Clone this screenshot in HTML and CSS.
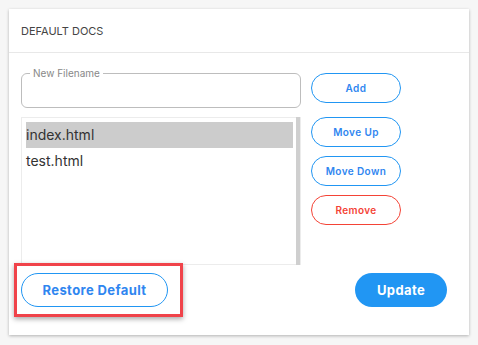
FILE: index.html
```html
<!DOCTYPE html>
<html>
<head>
<meta charset="utf-8">
<link rel="stylesheet" href="styles.css">
</head>
<body>
<div class="card">
  <div class="card-header">Default Docs</div>
  <div class="card-body">
    <div class="editor">
      <fieldset class="field">
        <legend class="field-label">New Filename</legend>
        <input class="field-input" type="text">
      </fieldset>
      <button class="btn btn-outline btn-small btn-add">Add</button>
      <div class="list">
        <div class="list-items">
          <div class="list-item selected">index.html</div>
          <div class="list-item">test.html</div>
        </div>
        <div class="list-scroll"></div>
      </div>
      <div class="actions">
        <button class="btn btn-outline btn-small">Move Up</button>
        <button class="btn btn-outline btn-small">Move Down</button>
        <button class="btn btn-danger btn-small">Remove</button>
      </div>
    </div>
  </div>
  <div class="card-footer">
    <div class="highlight-wrap">
      <button class="btn btn-outline btn-large btn-restore">Restore Default</button>
      <div class="highlight"></div>
    </div>
    <button class="btn btn-primary btn-large btn-update">Update</button>
  </div>
</div>
</body>
</html>
```

FILE: styles.css
```css
* { box-sizing: border-box; }
html, body { margin: 0; padding: 0; }
body {
  background: #f6f6f6;
  padding: 9px;
  font-family: Inter, "Open Sans", sans-serif;
  color: #333;
}
.card {
  width: 460px;
  height: 326px;
  background: #fff;
  box-shadow: 0 1px 3px rgba(0,0,0,0.28);
  display: flex;
  flex-direction: column;
}
.card-header {
  height: 44px;
  padding: 0 12px;
  display: flex;
  align-items: center;
  font-size: 11px;
  text-transform: uppercase;
  color: #444;
  border-bottom: 1px solid #e8e8e8;
}
.card-body {
  padding: 14px 12px 0 12px;
}
.editor {
  display: grid;
  grid-template-columns: 280px 90px;
  column-gap: 10px;
  row-gap: 9px;
}
.field {
  margin: 0;
  padding: 0 8px 0 8px;
  border: 1px solid #bdbdbd;
  border-radius: 6px;
  height: 41px;
}
.field-label {
  font-size: 10px;
  color: #888;
  padding: 0 3px;
  margin-left: 0;
  line-height: 12px;
}
.field-input {
  border: none;
  outline: none;
  width: 100%;
  height: 26px;
  font: inherit;
  font-size: 13px;
  background: transparent;
}
.btn {
  font-family: inherit;
  font-weight: 600;
  letter-spacing: 0.4px;
  cursor: pointer;
  background: #fff;
  padding: 0;
}
.btn-small {
  width: 90px;
  height: 30px;
  border-radius: 15px;
  font-size: 10px;
}
.btn-outline {
  border: 1px solid #2196f3;
  color: #2f86f0;
}
.btn-danger {
  border: 1px solid #f44336;
  color: #f44336;
}
.btn-add {
  margin-top: 6px;
}
.list {
  height: 148px;
  border: 1px solid #ececec;
  display: flex;
}
.list-items {
  flex: 1;
  padding: 4px 3px 0 4px;
}
.list-item {
  height: 26px;
  line-height: 26px;
  font-size: 14px;
  color: #333;
}
.list-item.selected {
  background: #cccccc;
}
.list-scroll {
  width: 4px;
  background: #cfcfcf;
  margin: -1px 0;
}
.actions {
  display: flex;
  flex-direction: column;
  gap: 9px;
}
.card-footer {
  display: flex;
  justify-content: space-between;
  align-items: flex-start;
  padding: 8px 22px 0 12px;
}
.btn-large {
  height: 34px;
  border-radius: 17px;
  font-size: 13px;
  font-weight: 700;
}
.btn-restore {
  width: 147px;
}
.btn-primary {
  width: 92px;
  background: #2196f3;
  border: none;
  color: #fff;
}
.highlight-wrap {
  position: relative;
}
.highlight {
  position: absolute;
  left: -7px;
  top: -10px;
  width: 169px;
  height: 54px;
  border: 3px solid #f0434a;
  box-shadow: 0 2px 5px rgba(0,0,0,0.35);
  pointer-events: none;
}
```
